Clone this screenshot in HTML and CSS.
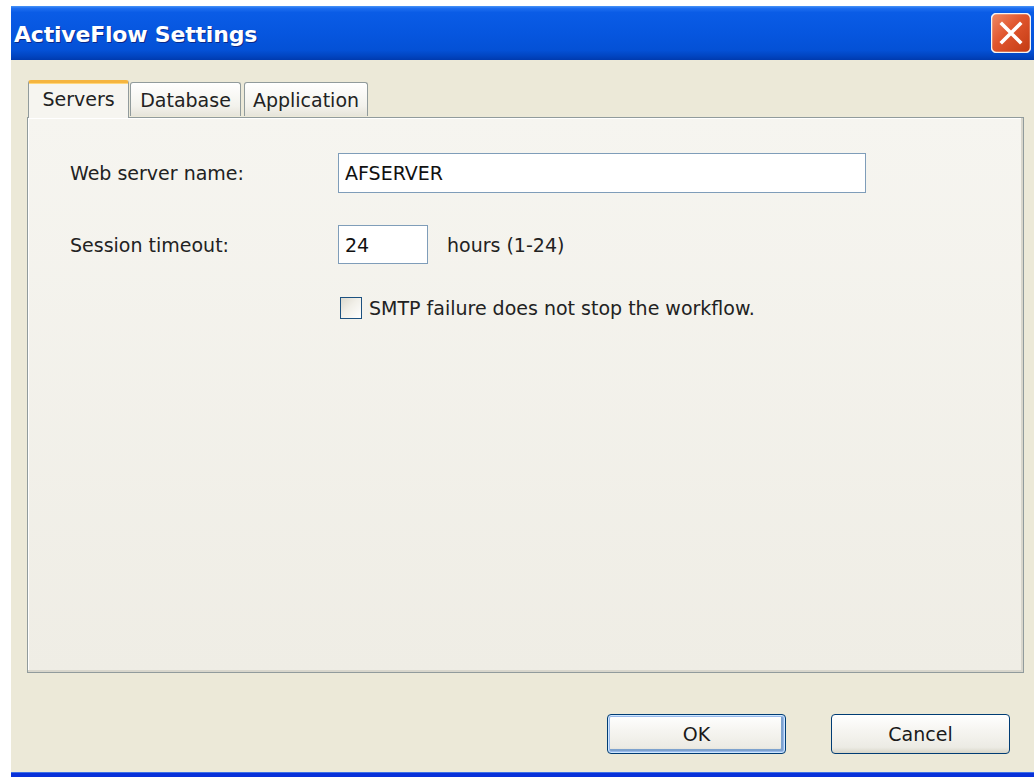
FILE: index.html
```html
<!DOCTYPE html>
<html lang="en">
<head>
<meta charset="utf-8">
<title>ActiveFlow Settings</title>
<link rel="stylesheet" href="styles.css">
</head>
<body>
<div class="window">
  <div class="titlebar">
    <span class="title">ActiveFlow Settings</span>
    <button class="close" aria-label="Close">
      <svg width="40" height="40" viewBox="0 0 40 40">
        <defs>
          <linearGradient id="closeFill" x1="0" y1="0" x2="1" y2="1">
            <stop offset="0" stop-color="#F08A66"/>
            <stop offset="0.45" stop-color="#E0552D"/>
            <stop offset="1" stop-color="#C23A12"/>
          </linearGradient>
        </defs>
        <rect x="0.5" y="0.5" width="39" height="39" rx="5" fill="url(#closeFill)" stroke="#F6F3F0" stroke-width="1.5"/>
        <path d="M11 11 L29 29 M29 11 L11 29" stroke="#FFFFFF" stroke-width="3.6" stroke-linecap="square"/>
      </svg>
    </button>
  </div>

  <div class="client">
    <div class="tabs">
      <div class="tab active">Servers</div>
      <div class="tab tab-db">Database</div>
      <div class="tab tab-app">Application</div>
    </div>

    <div class="panel">
      <div class="form">
        <div class="row">
          <label class="label" for="server">Web server name:</label>
          <input id="server" class="field field-wide" type="text" value="AFSERVER">
        </div>
        <div class="row">
          <label class="label" for="timeout">Session timeout:</label>
          <input id="timeout" class="field field-short" type="text" value="24">
          <span class="unit">hours (1-24)</span>
        </div>
        <div class="row row-check">
          <span class="checkbox"></span>
          <span class="check-label">SMTP failure does not stop the workflow.</span>
        </div>
      </div>
    </div>

    <div class="buttons">
      <button class="btn btn-default">OK</button>
      <button class="btn">Cancel</button>
    </div>
  </div>
</div>
</body>
</html>
```

FILE: styles.css
```css
html, body {
  margin: 0;
  padding: 0;
  background: #FFFFFF;
}

body {
  font-family: "DejaVu Sans", sans-serif;
  font-size: 19px;
  color: #222222;
}

.window {
  margin: 6px 0 0 11px;
  width: 1023px;
  height: 771px;
  display: flex;
  flex-direction: column;
}

/* Luna blue caption bar */
.titlebar {
  height: 54px;
  flex: none;
  display: flex;
  align-items: center;
  justify-content: space-between;
  padding: 0 3px 0 3px;
  box-sizing: border-box;
  background: linear-gradient(#4A95F7 0, #1E6EF0 4%, #0A5CE6 12%, #0656DF 50%, #0451D6 82%, #0143BE 94%, #003AAE 100%);
}

.title {
  color: #FFFFFF;
  font-family: "DejaVu Sans", sans-serif;
  font-weight: bold;
  font-size: 22px;
  letter-spacing: -0.2px;
  text-shadow: 1px 1px 0 #0A2A8A;
  margin-top: 2px;
}

.close {
  border: 0;
  padding: 0;
  margin: 0;
  background: none;
  width: 40px;
  height: 40px;
  display: block;
}

.close svg {
  display: block;
}

.client {
  flex: 1;
  background: #ECE9D8;
  display: flex;
  flex-direction: column;
  padding: 19px 10px 0 16px;
  box-sizing: border-box;
  border-bottom: 4px solid #0831D9;
  box-shadow: inset 0 -1px 0 #3C6FE8;
}

/* Tab strip */
.tabs {
  display: flex;
  align-items: flex-end;
  padding-left: 1px;
  height: 38px;
  position: relative;
  z-index: 2;
}

.tab {
  height: 34px;
  box-sizing: border-box;
  border: 1px solid #919B9C;
  border-bottom: 0;
  border-radius: 3px 3px 0 0;
  background: linear-gradient(#FFFFFF, #F3F2EC 70%, #E6E4DA);
  display: flex;
  align-items: center;
  justify-content: center;
  margin-bottom: 1px;
}

.tab.active {
  width: 101px;
  height: 38px;
  margin-bottom: -1px;
  background: #F6F5F0;
  border-top: 3px solid #F5B53F;
  box-shadow: inset 0 1px 0 #FFD67A;
  padding-bottom: 3px;
}

.tab-db {
  width: 111px;
  margin-left: 1px;
}

.tab-app {
  width: 124px;
  margin-left: 3px;
}

/* Page area under the tabs */
.panel {
  height: 556px;
  flex: none;
  box-sizing: border-box;
  border: 1px solid #919B9C;
  box-shadow: inset -2px -2px 0 #D8D6CC, inset 1px 1px 0 #FFFFFF;
  background: linear-gradient(#F6F5F0, #EFEDE5);
  padding: 35px 0 0 42px;
}

.form {
  display: flex;
  flex-direction: column;
  gap: 32px;
}

.row {
  display: flex;
  align-items: center;
}

.label {
  width: 268px;
  flex: none;
}

.field {
  font: inherit;
  color: #111111;
  box-sizing: border-box;
  border: 1px solid #7F9DB9;
  background: #FFFFFF;
  padding: 0 0 0 6px;
  margin: 0;
  outline: none;
}

.field-wide {
  width: 528px;
  height: 40px;
}

.field-short {
  width: 90px;
  height: 39px;
}

.unit {
  margin-left: 19px;
}

.row-check {
  padding-left: 270px;
  margin-top: 1px;
}

.checkbox {
  width: 22px;
  height: 22px;
  box-sizing: border-box;
  border: 1px solid #1C5180;
  background: linear-gradient(135deg, #DCD9CE 0, #F1EFE8 45%, #FFFFFF 100%);
  flex: none;
}

.check-label {
  margin-left: 7px;
}

/* Dialog buttons */
.buttons {
  display: flex;
  justify-content: flex-end;
  gap: 45px;
  padding: 41px 14px 0 0;
}

.btn {
  font: inherit;
  color: #1A1A1A;
  width: 179px;
  height: 40px;
  box-sizing: border-box;
  border: 1px solid #003C74;
  border-radius: 4px;
  background: linear-gradient(#FFFFFF 0, #F6F5F1 40%, #ECEBE4 85%, #D8D5C8 100%);
  padding: 0;
  margin: 0;
}

.btn-default {
  box-shadow: inset 0 0 0 1px #CEE7FF, inset 0 0 0 2px #98B8EA, inset -2px -2px 0 2px #7DA2CE;
}
```
